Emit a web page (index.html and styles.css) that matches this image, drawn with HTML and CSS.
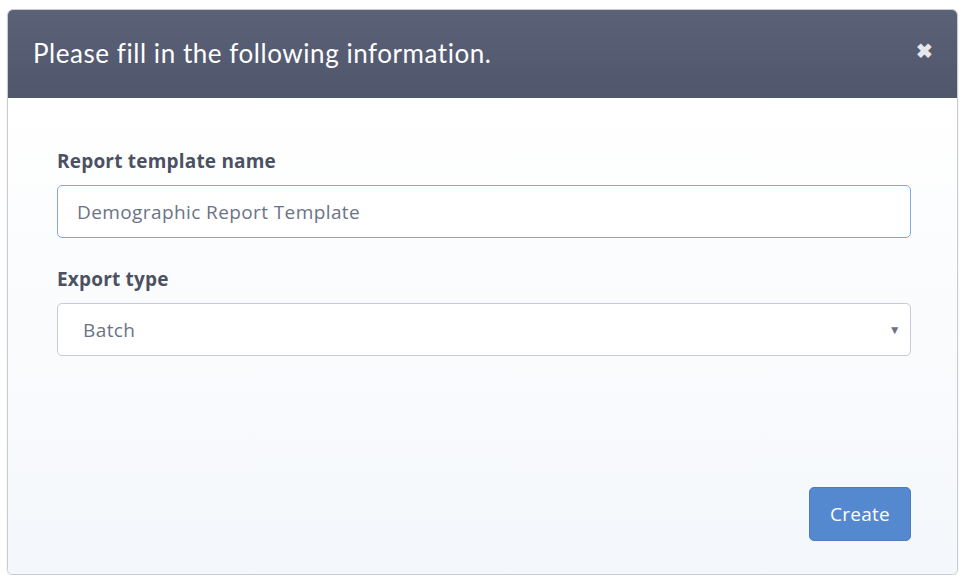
FILE: index.html
```html
<!DOCTYPE html>
<html>
<head>
<meta charset="utf-8">
<link rel="stylesheet" href="styles.css">
</head>
<body>
<div class="modal">
  <div class="modal-header">
    <h1 class="modal-title">Please fill in the following information.</h1>
    <span class="close">&#x2716;</span>
  </div>
  <div class="modal-body">
    <div class="field">
      <label class="label">Report template name</label>
      <div class="input focused">Demographic Report Template</div>
    </div>
    <div class="field">
      <label class="label">Export type</label>
      <div class="input select">
        <span>Batch</span>
        <span class="caret">&#9660;</span>
      </div>
    </div>
    <div class="footer">
      <button class="btn">Create</button>
    </div>
  </div>
</div>
</body>
</html>
```

FILE: styles.css
```css
html, body {
  margin: 0;
  padding: 0;
  background: #ffffff;
}
body {
  padding: 9px 8px 0 7px;
  font-family: Lato, "Open Sans", sans-serif;
}
.modal {
  width: 951px;
  height: 566px;
  box-sizing: border-box;
  border: 1px solid #c9ccd2;
  border-radius: 6px;
  overflow: hidden;
  display: flex;
  flex-direction: column;
  box-shadow: 0 1px 2px rgba(0,0,0,0.12);
}
.modal-header {
  height: 88px;
  flex: none;
  background: linear-gradient(#5b6177, #50566b);
  display: flex;
  align-items: center;
  justify-content: space-between;
  padding: 0 24px 2px 25px;
  box-sizing: border-box;
}
.modal-title {
  margin: 0;
  color: #ffffff;
  font-size: 26px;
  font-weight: 400;
  letter-spacing: 0.55px;
}
.close {
  color: #e6e8ec;
  font-size: 20px;
  font-weight: 700;
  margin-top: -6px;
}
.modal-body {
  flex: 1;
  background: linear-gradient(#ffffff, #f4f7fb);
  padding: 50px 46px 33px 49px;
  display: flex;
  flex-direction: column;
}
.field {
  margin-bottom: 28px;
}
.label {
  display: block;
  color: #4b5162;
  font-family: "Open Sans", sans-serif;
  font-size: 19px;
  font-weight: 700;
  margin-bottom: 11px;
  letter-spacing: 0.2px;
}
.input {
  height: 53px;
  box-sizing: border-box;
  border: 1px solid #c8ccd2;
  border-radius: 5px;
  background: #ffffff;
  padding: 0 19px;
  display: flex;
  align-items: center;
  color: #6b7386;
  font-family: "Open Sans", sans-serif;
  font-size: 19px;
  letter-spacing: 0.4px;
}
.input.focused {
  border-color: #7ea9e6;
}
.select {
  justify-content: space-between;
  padding: 0 9px 0 25px;
}
.caret {
  font-size: 12px;
  color: #6b7386;
}
.footer {
  margin-top: auto;
  display: flex;
  justify-content: flex-end;
}
.btn {
  width: 102px;
  height: 54px;
  border: 1px solid #4a7cc2;
  border-radius: 5px;
  background: #5488cf;
  color: #ffffff;
  font-family: "Open Sans", sans-serif;
  font-size: 19px;
  letter-spacing: 0.3px;
  padding: 0;
}
```
